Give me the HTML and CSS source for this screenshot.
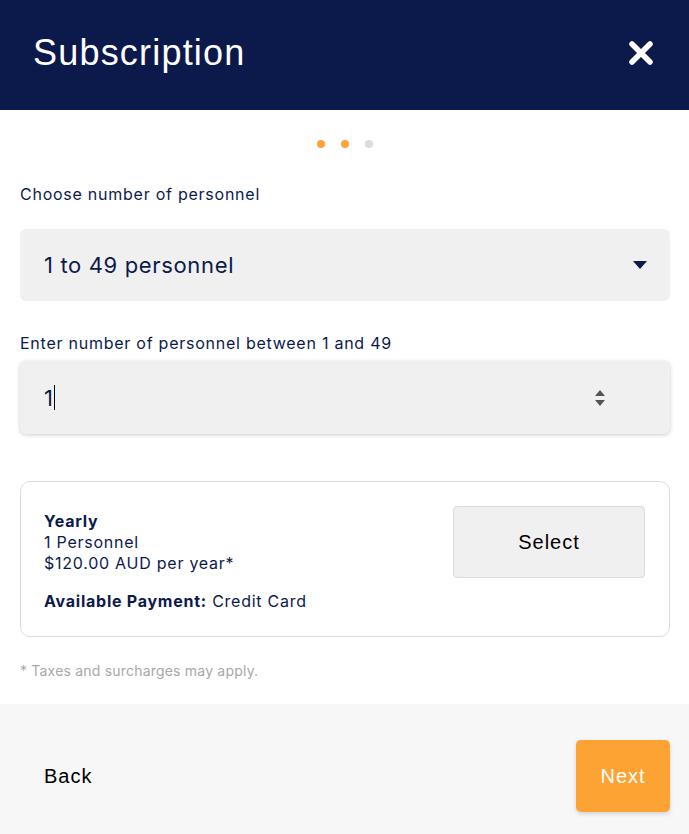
FILE: index.html
```html
<!DOCTYPE html>
<html lang="en">
<head>
    <meta charset="UTF-8">
    <meta name="viewport" content="width=device-width, initial-scale=1.0">
    <title>Subscription</title>
    <link rel="stylesheet" href="styles.css">
</head>
<body>
    <div class="modal">
        <div class="header">
            <h1>Subscription</h1>
            <span class="close">
                <svg width="26" height="26" viewBox="0 0 26 26"><path d="M4 4 L22 22 M22 4 L4 22" stroke="#fff" stroke-width="5.5" stroke-linecap="round"/></svg>
            </span>
        </div>

        <div class="body">
            <div class="dots">
                <span class="dot on"></span>
                <span class="dot on"></span>
                <span class="dot"></span>
            </div>

            <label class="label">Choose number of personnel</label>
            <div class="select">
                <span>1 to 49 personnel</span>
                <svg width="14" height="8" viewBox="0 0 14 8"><path d="M0 0 H14 L7 8 Z" fill="#0c1a4b"/></svg>
            </div>

            <label class="label second">Enter number of personnel between 1 and 49</label>
            <div class="number">
                <span class="value">1<span class="cursor"></span></span>
                <svg class="spin" width="12" height="18" viewBox="0 0 12 18"><path d="M6 1 L11 7 H1 Z M1 11 H11 L6 17 Z" fill="#555"/></svg>
            </div>

            <div class="plan">
                <div class="plan-info">
                    <b>Yearly</b>
                    <div>1 Personnel</div>
                    <div>$120.00 AUD per year*</div>
                    <div class="payment"><b>Available Payment:</b> Credit Card</div>
                </div>
                <button class="select-btn">Select</button>
            </div>

            <p class="note">* Taxes and surcharges may apply.</p>
        </div>

        <div class="footer">
            <button class="back">Back</button>
            <button class="next">Next</button>
        </div>
    </div>
</body>
</html>
```

FILE: styles.css
```css
body {
    margin: 0;
    font-family: 'Inter', 'Roboto', sans-serif;
    background: #fff;
    color: #0c1a4b;
}
.modal {
    width: 689px;
    height: 834px;
    display: flex;
    flex-direction: column;
}
.header {
    height: 110px;
    background: #0c1a4b;
    display: flex;
    align-items: center;
    justify-content: space-between;
    padding: 0 35px 4px 33px;
    box-sizing: border-box;
}
.header h1 {
    margin: 0;
    color: #fff;
    font-family: 'Liberation Sans', Arial, sans-serif;
    font-weight: 400;
    font-size: 36px;
    letter-spacing: 1.2px;
}
.close {
    display: flex;
}
.body {
    padding: 0 19px 0 20px;
    flex: 1;
}
.dots {
    display: flex;
    justify-content: center;
    gap: 16px;
    padding-top: 30px;
    height: 8px;
}
.dot {
    width: 8px;
    height: 8px;
    border-radius: 50%;
    background: #dddddd;
}
.dot.on {
    background: #fda333;
}
.label {
    display: block;
    font-size: 16px;
    letter-spacing: 0.75px;
    margin-top: 36px;
    margin-bottom: 25px;
}
.label.second {
    margin-top: 32px;
    margin-bottom: 8px;
}
.select {
    height: 72px;
    background: #f0f0f0;
    border-radius: 6px;
    display: flex;
    align-items: center;
    justify-content: space-between;
    padding: 0 23px 0 24px;
    font-size: 22px;
    letter-spacing: 0.65px;
}
.number {
    height: 73px;
    background: #f0f0f0;
    border-radius: 6px;
    box-shadow: 0 1px 4px rgba(0, 0, 0, 0.2);
    display: flex;
    align-items: center;
    justify-content: space-between;
    padding: 0 64px 0 24px;
    font-size: 22px;
}
.value {
    display: flex;
    align-items: center;
}
.cursor {
    display: inline-block;
    width: 1px;
    height: 25px;
    background: #000;
    margin-left: 1px;
}
.plan {
    margin-top: 47px;
    border: 1px solid #dcdcdc;
    border-radius: 10px;
    height: 156px;
    box-sizing: border-box;
    display: flex;
    justify-content: space-between;
    align-items: flex-start;
    padding: 24px 24px 0 23px;
    font-size: 16px;
    line-height: 21px;
    letter-spacing: 0.75px;
}
.plan-info {
    padding-top: 5px;
}
.payment {
    margin-top: 17px;
}
.select-btn {
    width: 192px;
    height: 72px;
    background: #f0f0f0;
    border: 1px solid #dcdcdc;
    border-radius: 4px;
    font-family: 'Liberation Sans', Arial, sans-serif;
    font-size: 20px;
    letter-spacing: 1px;
    color: #000;
}
.note {
    margin: 25px 0 0;
    font-size: 14px;
    letter-spacing: 0.2px;
    color: #a8a8a8;
}
.footer {
    height: 130px;
    background: #f7f7f7;
    display: flex;
    align-items: flex-start;
    justify-content: space-between;
    padding: 36px 19px 0 44px;
    box-sizing: border-box;
}
.back {
    background: none;
    border: none;
    padding: 0;
    margin-top: 25px;
    font-family: 'Liberation Sans', Arial, sans-serif;
    font-size: 20px;
    letter-spacing: 1px;
    color: #000;
}
.next {
    width: 94px;
    height: 72px;
    background: #fda333;
    border: none;
    border-radius: 5px;
    box-shadow: 0 2px 4px rgba(0, 0, 0, 0.15);
    color: #fff;
    font-family: 'Liberation Sans', Arial, sans-serif;
    font-size: 20px;
    letter-spacing: 1px;
}
```
